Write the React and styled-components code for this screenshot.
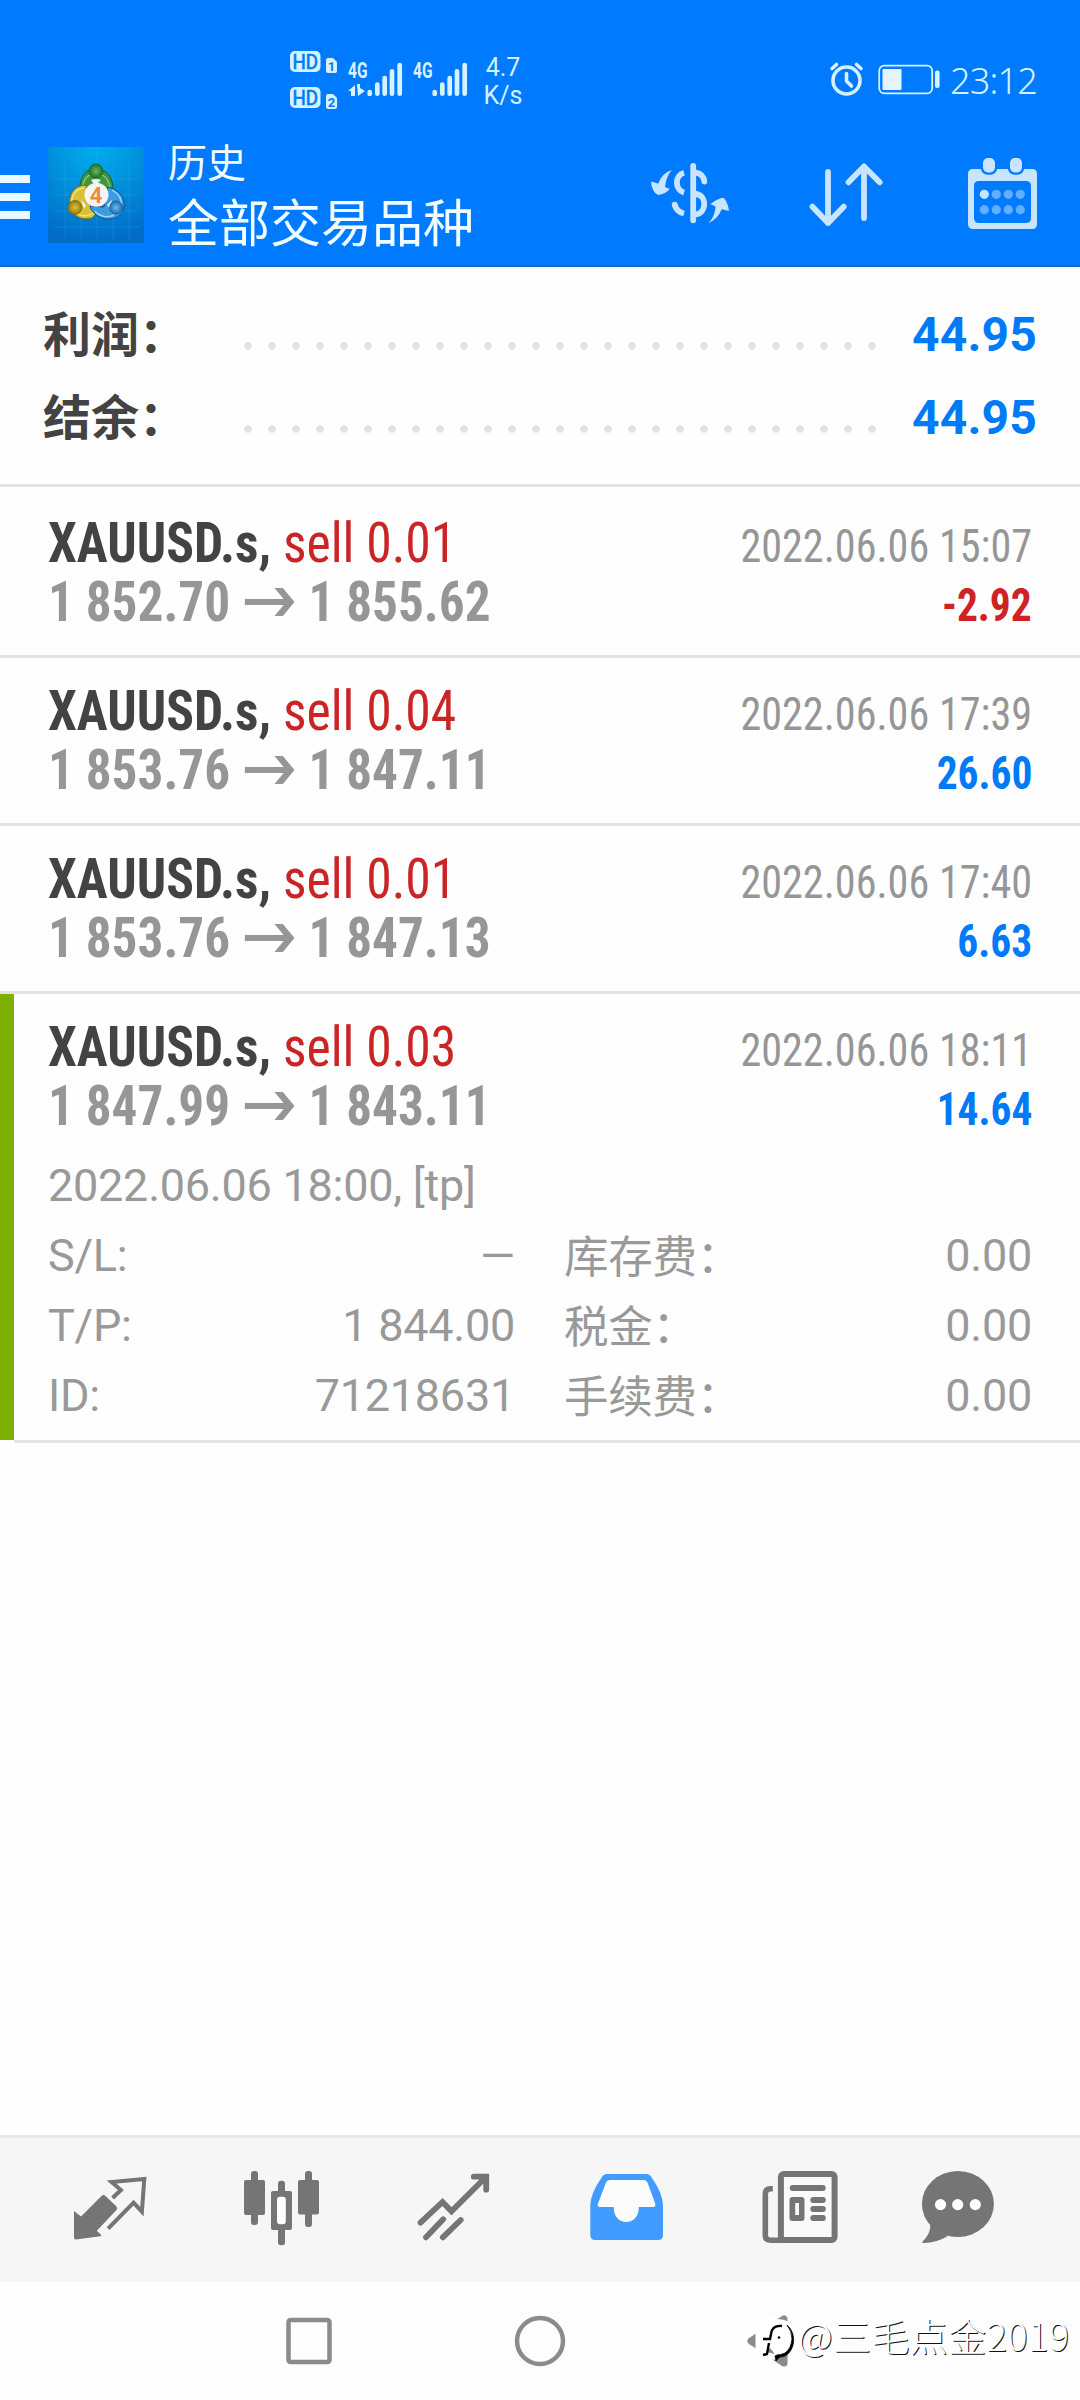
import styled, { createGlobalStyle } from 'styled-components';

const GlobalStyle = createGlobalStyle`
  * {
    box-sizing: border-box;
  }

  body {
    margin: 0;
    background: #fefefe;
    font-family: Roboto, "Noto Sans CJK SC", sans-serif;
  }
`;

const Screen = styled.main`
  display: flex;
  flex-direction: column;
  width: 1080px;
  height: 2400px;
  position: relative;
  overflow: hidden;
  background: #fefefe;
`;

const Header = styled.header`
  height: 267px;
  background: #007bff;
  border-bottom: 2px solid #1568c4;
  color: #f2fdff;
`;

const StatusBar = styled.div`
  height: 125px;
  padding: 40px 43px 0 290px;
  display: flex;
  align-items: flex-start;
  color: #d4f2ff;
`;

const Signals = styled.div`
  display: flex;
  padding-top: 10px;
`;

const NetSpeed = styled.div`
  width: 50px;
  margin-left: 3px;
  padding-top: 14px;
  font-size: 25px;
  line-height: 28px;
  text-align: center;
`;

const StatusRight = styled.div`
  display: flex;
  margin-left: auto;
`;

const Clock = styled.div`
  font-family: "Noto Sans", sans-serif;
  font-weight: 300;
  font-size: 36px;
  letter-spacing: -0.8px;
  line-height: 40px;
  margin-top: 21px;
  margin-left: 9px;
`;

const Toolbar = styled.div`
  display: flex;
  height: 140px;
  padding: 22px 28px 0 0;
`;

const Burger = styled.div`
  width: 30px;
  height: 44px;
  margin: 28px 18px 0 0;
  background: repeating-linear-gradient(#e8faff 0 8px, transparent 8px 18px);
`;

const Titles = styled.div`
  flex: 1;
  margin-left: 24px;
  font-family: "Noto Sans CJK SC", sans-serif;
`;

const Title = styled.div`
  font-size: 39px;
  line-height: 44px;
  margin-top: -9px;
`;

const Subtitle = styled.div`
  font-size: 51px;
  line-height: 60px;
  margin-top: 8px;
`;

const Actions = styled.div`
  display: flex;
  gap: 56px;
  margin-top: -4px;
`;

const Summary = styled.section`
  height: 220px;
  padding: 25px 43px 0 43px;
  border-bottom: 3px solid #e3e3e3;
`;

const SummaryRow = styled.div`
  display: flex;
  height: 83px;
  line-height: 86px;
  font-size: 48px;
  font-weight: 700;
  color: #434343;
`;

const SummaryLabel = styled.div`
  width: 193px;
  line-height: 79px;
  font-family: "Noto Sans CJK SC", sans-serif;
`;

const Dots = styled.div`
  width: 648px;
  height: 10px;
  margin-top: 49px;
  background: radial-gradient(circle at center, #e2e2e2 3.4px, transparent 4.2px) 0 0 / 24px 10px repeat-x;
`;

const SummaryValue = styled.div`
  margin-left: auto;
  letter-spacing: 0.2px;
  color: #007bf5;
`;

const Deals = styled.section`
  padding-top: 3px;
`;

const Deal = styled.article`
  height: ${p => (p.$open ? 449 : 168)}px;
  padding: 24px 48px 0 ${p => (p.$open ? 34 : 48)}px;
  border-bottom: 3px solid #e3e3e3;
`;

const Expanded = styled.div`
  display: flex;
  &::before {
    content: "";
    width: 14px;
    height: 446px;
    background: #7db000;
  }
  & > ${Deal} {
    flex: 1;
  }
`;

const Line = styled.div`
  display: flex;
  justify-content: space-between;
  height: 59px;
  line-height: 59px;
  white-space: pre;
  font-family: "Roboto Condensed", Roboto, sans-serif;
  font-stretch: 75%;
`;

const Left = styled.div`
  font-size: 55px;
  font-weight: ${p => (p.$price ? 700 : 400)};
  color: ${p => (p.$price ? '#949698' : '#cb2424')};
  transform: scaleX(${p => (p.$price ? 0.932 : 0.938)});
  transform-origin: left;
`;

const Symbol = styled.span`
  font-weight: 700;
  color: #434343;
`;

const ArrowSvg = styled.svg`
  margin: 0 14px 0 16px;
  vertical-align: 5px;
`;

const Right = styled.div`
  font-size: 46px;
  padding-top: 3px;
  color: #969696;
  transform: scaleX(0.917);
  transform-origin: right;
`;

const Profit = styled(Right)`
  font-weight: 700;
  color: ${p => (p.$loss ? '#cf2323' : '#007bf5')};
  transform: scaleX(0.9);
`;

const Details = styled.div`
  display: grid;
  grid-template-columns: 467px 1fr;
  column-gap: 49px;
  margin-top: 15px;
  font-size: 45px;
  letter-spacing: -0.25px;
  line-height: 70px;
  color: #999;
`;

const Comment = styled.div`
  grid-column: 1 / -1;
`;

const Detail = styled.div`
  display: flex;
  justify-content: space-between;
  height: 70px;
`;

const Cjk = styled.span`
  font-family: "Noto Sans CJK SC", sans-serif;
  font-size: 44.5px;
  line-height: 66px;
`;

const Tabs = styled.nav`
  display: flex;
  gap: 72px;
  height: 147px;
  margin-top: auto;
  padding: 19px 0 0 60px;
  background: #f6f6f6;
  border-top: 3px solid #e6e8e8;
  color: #757575;
`;

const SystemNav = styled.div`
  display: flex;
  gap: 172px;
  height: 118px;
  padding: 29px 0 0 279px;
  background: #fdfdfd;
`;

const Watermark = styled.div`
  position: absolute;
  right: 9px;
  top: 2304px;
  display: flex;
  align-items: center;
  height: 60px;
  font-family: "Noto Sans CJK SC", sans-serif;
  font-size: 38px;
  font-weight: 300;
  letter-spacing: 0.4px;
  color: #fff;
  text-shadow: 1px 1px 0 #111;
`;

const WatermarkText = styled.span`
  width: 273px;
  white-space: nowrap;
`;

const Sim = ({ data }) => (
  <svg width="65" height="60" viewBox="345 50 65 60">
    <text x="348" y="78" fontSize="21.500" fontWeight="700" fill="currentColor" textLength="19.500" lengthAdjust="spacingAndGlyphs">4G</text>
    {data && <path d="M348 91l7-6v11h-4v-5zM357 84h3v4l5 3-7 5z" fill="currentColor" />}
    <path d="M369.700 92v2M377.300 84.700v9M384.700 78v15.700M392 71.300v22.400M399.700 65v28.700"
      stroke="currentColor" strokeWidth="4.700" strokeLinecap="round" />
  </svg>
);

const HdBadges = () => (
  <svg width="55" height="80" viewBox="290 40 55 80">
    {[0, 36].map((dy, i) => (
      <g key={dy} transform={`translate(0 ${dy})`}>
        <rect x="290" y="51" width="30.500" height="21" rx="5" fill="currentColor" />
        <text x="292.500" y="69" fontSize="21" fill="#007bff" stroke="#007bff" strokeWidth="0.700" textLength="25.500" lengthAdjust="spacingAndGlyphs">HD</text>
        <path d="M326 60q0-2 2-2h5l4 4v9q0 2-2 2h-7q-2 0-2-2z" fill="currentColor" />
        <text x="331.500" y="71" fontSize="13" fontWeight="700" textAnchor="middle" fill="#007bff">{i + 1}</text>
      </g>
    ))}
  </svg>
);

const AlarmBattery = () => (
  <svg width="112" height="80" viewBox="829 40 112 80" fill="none" stroke="currentColor" strokeLinecap="round">
    <circle cx="846.500" cy="80.500" r="13.500" strokeWidth="3.600" />
    <path d="M846.500 73.500v7.500l5 5M832 68.500l4.500-4M861 68.500l-4.500-4" strokeWidth="3.600" />
    <rect x="879.200" y="65.700" width="53" height="27.600" rx="5" strokeWidth="1.700" />
    <rect x="882.500" y="69" width="19" height="21" rx="1" fill="#e6f3ff" stroke="none" />
    <rect x="935" y="70.500" width="4.600" height="17.500" rx="2" fill="currentColor" stroke="none" />
  </svg>
);

const Logo = () => (
  <svg width="96" height="96" viewBox="0 0 96 96">
    <defs>
      <radialGradient id="sky" cx="50%" cy="0%" r="100%">
        <stop offset="0" stopColor="#00aef0" />
        <stop offset="0.600" stopColor="#0087d6" />
        <stop offset="1" stopColor="#006cc8" />
      </radialGradient>
      <radialGradient id="green"><stop offset="0" stopColor="#6ab862" /><stop offset="1" stopColor="#1f7027" /></radialGradient>
      <radialGradient id="gold"><stop offset="0" stopColor="#dcc244" /><stop offset="1" stopColor="#94790e" /></radialGradient>
      <radialGradient id="azure"><stop offset="0" stopColor="#6cbcf0" /><stop offset="1" stopColor="#1c70b8" /></radialGradient>
    </defs>
    <rect width="96" height="96" fill="url(#sky)" />
    <path d="M17 16v76M33 16v76M49 4v88M65 16v76M81 16v76M4 32h88M4 48h88M4 64h88M4 80h88" stroke="#4cc0ee" strokeOpacity="0.250" strokeWidth="0.800" />
    <path d="M32 46C31 29 38 22 48 22s18 8 17 23c0 7-3 11-6 13L40 42z" fill="#3f963d" stroke="#1f5c2a" strokeWidth="1" />
    <path d="M34 44c1-12 5-17 14-17s14 6 14 18" fill="none" stroke="#8bc984" strokeWidth="1.200" />
    <path d="M38 38C25 38 20 49 22 60c2 9 12 14 22 11l8-8-12-14z" fill="#d8c136" stroke="#766a16" strokeWidth="1" />
    <path d="M36 41c-9 1-13 8-12 16M30 67c5 3 11 2 15-1" fill="none" stroke="#f0e78e" strokeWidth="1.400" />
    <path d="M60 40c12 3 17 11 16 20-1 9-10 13-19 12-9-2-14-8-15-13l14 1z" fill="#3d9be0" stroke="#15508c" strokeWidth="1" />
    <path d="M64 43c7 4 10 9 9 15M47 64c5 6 13 7 19 4" fill="none" stroke="#a2d6f6" strokeWidth="1.400" />
    <path d="M43 33q5-2 10 0l-3 3h-5zM33 53l5 5-2 4zM64 53l-5 5 3 4z" fill="#edf6ee" />
    <circle cx="48" cy="24" r="7" fill="url(#green)" stroke="#23652a" strokeWidth="0.800" />
    <circle cx="27" cy="60.500" r="7" fill="url(#gold)" stroke="#7f6c10" strokeWidth="0.800" />
    <circle cx="68" cy="60.500" r="6.500" fill="url(#azure)" stroke="#1a5c9c" strokeWidth="0.800" />
    <circle cx="48.500" cy="47.700" r="12" fill="#f5f5f7" />
    <text x="48" y="55.500" fontSize="22" fontWeight="700" textAnchor="middle" fill="#f58a33">4</text>
  </svg>
);

const ActionIcon = ({ children }) => (
  <svg width="100" height="100" viewBox="0 0 100 100" fill="none" stroke="#c8e4ff" strokeWidth="5.800" strokeLinecap="round" strokeLinejoin="round">
    {children}
  </svg>
);

const CurrencyIcon = () => (
  <ActionIcon>
    <path d="M53.200 22.800v54.500M56 29.700q7.500 1.300 8.300 8.800M56 51c11 1 11 19 0 20.300" />
    <path d="M44 29.800c-9.500 2.500-9.500 17 0 20M34.800 61.500q1.200 7 9.200 9" strokeLinecap="butt" />
    <circle cx="34.700" cy="61.700" r="2.900" fill="#c8e4ff" stroke="none" />
    <g fill="#c8e4ff" stroke="none">
      <path d="M31.700 27Q26 34 25 44l4.700 2Q26 51 18 52 15 51 13.500 47.500 11 43 11 38.700q4 .300 7.300 2Q22 30 31.700 27z" />
      <path d="M68.300 80Q75 74 75.500 63.500l-5.200-2.500Q75 57 82 54.800q2.500 0 4 3.200 2.500 5 3 9.700-3-.200-7.200-1.700Q78 76 68.300 80z" />
    </g>
  </ActionIcon>
);

const SortIcon = () => (
  <ActionIcon>
    <path d="M32 29v51M16.500 63.700L32 80l15.700-16.300M68 75V23.500M52.500 39.300L68 23.500l15.700 15.800" />
  </ActionIcon>
);

const CalendarIcon = () => (
  <ActionIcon>
    <g stroke="none">
      <path fillRule="evenodd" fill="#c8e4ff" d="M21 26h59q5 0 5 5v50q0 5-5 5H21q-5 0-5-5V31q0-5 5-5zM27 38q-5 0-5 5v32q0 5 5 5h47q5 0 5-5V43q0-5-5-5z" />
      {[31, 58].map(x => (
        <rect key={x} x={x - 1.2} y="13.800" width="14.400" height="16.800" rx="6" fill="#c8e4ff" stroke="#007bff" strokeWidth="2.400" />
      ))}
      {[51.3, 66.7].map((y, row) => [32.3, 44.3, 56.3, 68.3].map((x, col) => (
        <circle key={`${x}-${y}`} cx={x} cy={y} r="4.600" fill={row + col ? '#62aeff' : '#c8e6ff'} />
      )))}
    </g>
  </ActionIcon>
);

const Arrow = () => (
  <ArrowSvg width="54" height="28" viewBox="0 0 54 28" fill="none" stroke="currentColor" strokeWidth="6">
    <path d="M0 14h48" />
    <path d="M32 0h9l12.500 14L41 28h-9l12.500-14z" fill="currentColor" stroke="none" />
  </ArrowSvg>
);

const TabIcon = ({ children }) => (
  <svg width="100" height="100" viewBox="0 0 100 100" fill="currentColor" strokeLinecap="round">{children}</svg>
);

const QuotesIcon = () => (
  <TabIcon>
    <path d="M14 54l7 5.500L41.500 39q1.800-2 4 0l11 10.500q1.500 1.800 0 3.500L36.800 73.700l4.700 4.600-1 1L16 82.500q-2 .200-2-2z" />
    <path d="M52.600 41l8.300-8-9.300-8 32.700-3-2.400 32.700-8.300-9-25.500 26" fill="none" stroke="currentColor" strokeWidth="4" strokeLinecap="butt" />
  </TabIcon>
);

const ChartIcon = () => (
  <TabIcon>
    <rect x="19" y="14" width="7" height="54" rx="3" />
    <rect x="12" y="23" width="21" height="35" rx="2" />
    <rect x="46" y="23.700" width="7" height="64.500" rx="3" />
    <rect x="39" y="34" width="21" height="39" rx="2" />
    <rect x="45" y="39.700" width="8.800" height="27.500" rx="3" fill="#fff" />
    <rect x="73" y="14" width="7" height="56" rx="3" />
    <rect x="66" y="23" width="21" height="34.500" rx="2" />
  </TabIcon>
);

const TradeIcon = () => (
  <TabIcon>
    <g fill="none" stroke="currentColor" strokeWidth="5.800">
      <path d="M16.500 65.700l22-20.700 9 9.300 34.700-34.600M69.800 19.700h12.400v13" />
      <path d="M22 80.300l17.200-18M38.800 80.300l17.900-17.300" />
    </g>
  </TabIcon>
);

const HistoryIcon = () => (
  <TabIcon>
    <path fill="#429bff" d="M31 17h39.500q3.500 0 5.500 4 10.500 15 11 27v30q0 5-5 5H19.300q-5 0-5-5V48q.500-12 11-27 2-4 5.700-4z" />
    <path fill="#fbfbfb" d="M34 23h33q3.500 0 4.700 3l7.700 21q.600 3-2.400 3H62.800c.500 20-25.600 20-25.100 0H24q-3 0-2.200-3l8-21q1.200-3 4.200-3z" />
  </TabIcon>
);

const NewsIcon = () => (
  <TabIcon>
    <rect x="32.900" y="17" width="53.700" height="66" rx="3" fill="#fafafa" stroke="currentColor" strokeWidth="6" />
    <path d="M24.800 31.800h-2q-5.500 0-5.500 5.500v41q0 5 5.500 5h12" fill="none" stroke="currentColor" strokeWidth="5.600" strokeLinecap="butt" />
    <rect x="41.700" y="28" width="36" height="6" rx="3" />
    <path fillRule="evenodd" d="M44.500 40h9q3 0 3 3v18q0 3-3 3h-9q-3 0-3-3V43q0-3 3-3zM47.200 46v12h3.800V46z" />
    <rect x="62.300" y="40" width="15.500" height="6" rx="3" />
    <rect x="62.300" y="49" width="15.500" height="6" rx="3" />
    <rect x="62.300" y="58" width="15.500" height="6" rx="3" />
  </TabIcon>
);

const ChatIcon = () => (
  <TabIcon>
    <ellipse cx="37.900" cy="47" rx="36" ry="33" />
    <path d="M10 66c1.500 9-4 15-7 18q-2 2 1 2 12 0 24-7z" />
    <g fill="#fff">
      <circle cx="20.500" cy="47.600" r="5.600" />
      <circle cx="37.700" cy="47.600" r="5.600" />
      <circle cx="55.300" cy="47.600" r="5.600" />
    </g>
  </TabIcon>
);

const NavIcon = ({ children }) => (
  <svg width="60" height="60" viewBox="0 0 60 60" fill="none" stroke="#8b8b8b" strokeWidth="4.500">{children}</svg>
);

const WatermarkLogo = () => (
  <svg width="50" height="60" viewBox="748 2306 50 60">
    <path d="M755.500 2328l14-12 7 5q13 0 16 8l1 12q-1 10-6 14l-10 1-1 6-8-1-13-9z" fill="#fff" />
    <path d="M767 2354l3-4 5 6z" fill="#8b8b8b" />
    <path d="M782 2328q-10-1-11 8l-1 5h-7M769 2345l-2 11-4 1" fill="none" stroke="#000" strokeWidth="2.400" />
    <path d="M787 2327q5 6 5 14-1 10-7 14-3 2-8 2l-2 1 1 5q1-2 4-4 7 0 11-7c4-7 4-18-4-25z" fill="#000" stroke="#000" strokeWidth="0.800" />
    <circle cx="779" cy="2339.500" r="1.300" fill="#000" />
  </svg>
);

const deals = [
  { id: 1, volume: '0.01', open: '1 852.70', close: '1 855.62', time: '2022.06.06 15:07', profit: '-2.92' },
  { id: 2, volume: '0.04', open: '1 853.76', close: '1 847.11', time: '2022.06.06 17:39', profit: '26.60' },
  { id: 3, volume: '0.01', open: '1 853.76', close: '1 847.13', time: '2022.06.06 17:40', profit: '6.63' },
  {
    id: 4, volume: '0.03', open: '1 847.99', close: '1 843.11', time: '2022.06.06 18:11', profit: '14.64',
    comment: '2022.06.06 18:00, [tp]',
    details: [
      ['S/L:', '—', '库存费：', '0.00'],
      ['T/P:', '1 844.00', '税金：', '0.00'],
      ['ID:', '71218631', '手续费：', '0.00'],
    ],
  },
];

const DealRow = ({ deal }) => (
  <Deal $open={!!deal.details}>
    <Line>
      <Left><Symbol>XAUUSD.s,</Symbol> sell {deal.volume}</Left>
      <Right>{deal.time}</Right>
    </Line>
    <Line>
      <Left $price>{deal.open}<Arrow />{deal.close}</Left>
      <Profit $loss={deal.profit.startsWith('-')}>{deal.profit}</Profit>
    </Line>
    {deal.details && (
      <Details>
        <Comment>{deal.comment}</Comment>
        {deal.details.map(([label, value, cnLabel, cnValue]) => [
          <Detail key={label}><span>{label}</span><span>{value}</span></Detail>,
          <Detail key={cnLabel}><Cjk>{cnLabel}</Cjk><span>{cnValue}</span></Detail>,
        ])}
      </Details>
    )}
  </Deal>
);

export default function App() {
  return (
    <Screen>
      <GlobalStyle />
      <Header>
        <StatusBar>
          <HdBadges />
          <Signals>
            <Sim data />
            <Sim />
          </Signals>
          <NetSpeed>4.7 K/s</NetSpeed>
          <StatusRight>
            <AlarmBattery />
            <Clock>23:12</Clock>
          </StatusRight>
        </StatusBar>
        <Toolbar>
          <Burger />
          <Logo />
          <Titles>
            <Title>历史</Title>
            <Subtitle>全部交易品种</Subtitle>
          </Titles>
          <Actions>
            <CurrencyIcon />
            <SortIcon />
            <CalendarIcon />
          </Actions>
        </Toolbar>
      </Header>
      <Summary>
        {['利润：', '结余：'].map(label => (
          <SummaryRow key={label}>
            <SummaryLabel>{label}</SummaryLabel>
            <Dots />
            <SummaryValue>44.95</SummaryValue>
          </SummaryRow>
        ))}
      </Summary>
      <Deals>
        {deals.map(deal => (deal.details
          ? <Expanded key={deal.id}><DealRow deal={deal} /></Expanded>
          : <DealRow key={deal.id} deal={deal} />))}
      </Deals>
      <Tabs>
        <QuotesIcon />
        <ChartIcon />
        <TradeIcon />
        <HistoryIcon />
        <NewsIcon />
        <ChatIcon />
      </Tabs>
      <SystemNav>
        <NavIcon><rect x="9.500" y="9" width="41" height="42" rx="2" /></NavIcon>
        <NavIcon><circle cx="29" cy="30" r="23" /></NavIcon>
        <NavIcon><path d="M8 30l33-22v44z" strokeLinejoin="round" strokeWidth="7" /></NavIcon>
      </SystemNav>
      <Watermark>
        <WatermarkLogo />
        <WatermarkText>@三毛点金2019</WatermarkText>
      </Watermark>
    </Screen>
  );
}
